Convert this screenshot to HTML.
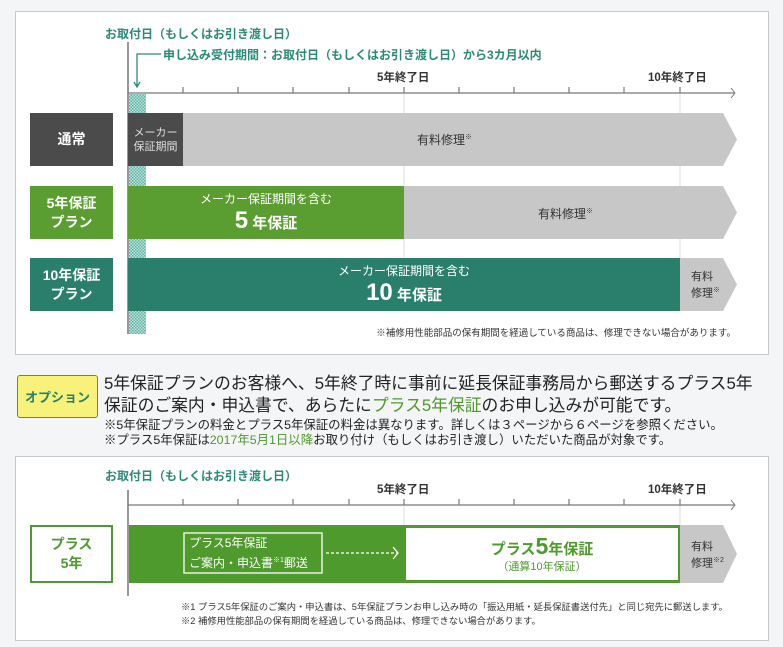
<!DOCTYPE html>
<html><head><meta charset="utf-8"><style>
*{margin:0;padding:0;box-sizing:border-box}
body{width:783px;height:647px;background:#f4f5f6;position:relative;overflow:hidden;font-family:"Liberation Sans","Noto Sans CJK JP",sans-serif;color:#333}
.a{position:absolute;white-space:nowrap}
.box{position:absolute;background:#fff;border:1px solid #c8c8c8}
.lbl{position:absolute;color:#fff;font-weight:bold;font-size:14px;display:flex;align-items:center;justify-content:center;text-align:center;line-height:19px}
.c{display:flex;align-items:center;justify-content:center;text-align:center;flex-direction:column}
.teal{color:#2a8a78}
</style></head><body>
<div class="box" style="left:15px;top:11px;width:754px;height:344px"></div>
<div class="box" style="left:15px;top:456px;width:754px;height:185px"></div>
<svg class="a" style="left:0;top:0" width="783" height="647">
<defs><pattern id="h" width="3" height="3" patternUnits="userSpaceOnUse"><rect width="3" height="3" fill="#bfe3dc"/><rect width="1.5" height="1.5" fill="#5fb3a3"/><rect x="1.5" y="1.5" width="1.5" height="1.5" fill="#5fb3a3"/></pattern></defs>
<rect x="129" y="94" width="17" height="240" fill="url(#h)"/>
<line x1="404" y1="94" x2="404" y2="311" stroke="#ddd"/>
<line x1="680" y1="94" x2="680" y2="311" stroke="#ddd"/>
<line x1="128" y1="42" x2="128" y2="334" stroke="#777" stroke-width="1.5"/>
<line x1="128" y1="93" x2="734" y2="93" stroke="#777" stroke-width="1.2"/>
<path d="M731 88 L735 93 L731 98" fill="none" stroke="#777"/>
<g stroke="#777" stroke-width="1.2"><line x1="183" y1="87" x2="183" y2="93"/><line x1="238" y1="87" x2="238" y2="93"/><line x1="293" y1="87" x2="293" y2="93"/><line x1="349" y1="87" x2="349" y2="93"/><line x1="404" y1="87" x2="404" y2="93"/><line x1="459" y1="87" x2="459" y2="93"/><line x1="514" y1="87" x2="514" y2="93"/><line x1="569" y1="87" x2="569" y2="93"/><line x1="624" y1="87" x2="624" y2="93"/><line x1="680" y1="87" x2="680" y2="93"/></g>
<path d="M161 54 L137 54 L137 86 M134 82 L137 87 L140 82" fill="none" stroke="#2a8a78" stroke-width="1.3"/>
<polygon points="183,113 723,113 737,139.5 723,166 183,166" fill="#c6c7c6"/>
<rect x="128" y="113" width="55" height="53" fill="#4b4b4b"/>
<polygon points="404,186 723,186 737,212.5 723,239 404,239" fill="#c6c7c6"/>
<rect x="128" y="186" width="276" height="53" fill="#5a9e32"/>
<polygon points="680,258 723,258 737,284.5 723,311 680,311" fill="#c6c7c6"/>
<rect x="128" y="258" width="552" height="53" fill="#2a7f6c"/>
<line x1="404" y1="505" x2="404" y2="525" stroke="#ddd"/>
<line x1="680" y1="505" x2="680" y2="525" stroke="#ddd"/>
<line x1="128" y1="490" x2="128" y2="596" stroke="#777" stroke-width="1.5"/>
<line x1="128" y1="505" x2="734" y2="505" stroke="#777" stroke-width="1.2"/>
<path d="M731 500 L735 505 L731 510" fill="none" stroke="#777"/>
<g stroke="#777" stroke-width="1.2"><line x1="183" y1="499" x2="183" y2="505"/><line x1="238" y1="499" x2="238" y2="505"/><line x1="293" y1="499" x2="293" y2="505"/><line x1="349" y1="499" x2="349" y2="505"/><line x1="404" y1="499" x2="404" y2="505"/><line x1="459" y1="499" x2="459" y2="505"/><line x1="514" y1="499" x2="514" y2="505"/><line x1="569" y1="499" x2="569" y2="505"/><line x1="624" y1="499" x2="624" y2="505"/><line x1="680" y1="499" x2="680" y2="505"/></g>
<polygon points="680,525 723,525 737,554 723,583 680,583" fill="#c6c7c6"/>
<rect x="129" y="525" width="551" height="58" fill="#4f9a2c"/>
<rect x="406" y="528" width="272" height="52" fill="#fff"/>
<rect x="184" y="533" width="138" height="40" fill="none" stroke="#fff" stroke-width="1.3"/>
<line x1="326" y1="553" x2="398" y2="553" stroke="#fff" stroke-width="1.3" stroke-dasharray="3 2"/>
<path d="M393 547 L398 553 L393 559" fill="none" stroke="#fff" stroke-width="1.3"/>
</svg>
<div class="a teal" style="left:105px;top:25px;font-size:12px;font-weight:bold">お取付日（もしくはお引き渡し日）</div>
<div class="a teal" style="left:163px;top:46px;font-size:12px;font-weight:bold">申し込み受付期間：お取付日（もしくはお引き渡し日）から3カ月以内</div>
<div class="a" style="left:377px;top:69px;font-size:11.5px;font-weight:bold">5年終了日</div>
<div class="a" style="left:648px;top:69px;font-size:11.5px;font-weight:bold">10年終了日</div>
<div class="lbl" style="left:30px;top:113px;width:83px;height:53px;background:#4b4b4b">通常</div>
<div class="lbl" style="left:30px;top:186px;width:83px;height:53px;background:#5a9e32">5年保証<br>プラン</div>
<div class="lbl" style="left:30px;top:258px;width:83px;height:53px;background:#2a7f6c">10年保証<br>プラン</div>
<div class="a c" style="left:128px;top:113px;width:55px;height:53px;color:#ddd;font-size:11px;line-height:14px">メーカー<br>保証期間</div>
<div class="a" style="left:417px;top:131px;font-size:12px">有料修理<sup style="font-size:7px">※</sup></div>
<div class="a c" style="left:128px;top:186px;width:276px;height:53px;color:#fff"><div style="font-size:12px">メーカー保証期間を含む</div><div style="font-weight:bold;font-size:15px"><span style="font-size:24px">5</span> 年保証</div></div>
<div class="a" style="left:538px;top:205px;font-size:12px">有料修理<sup style="font-size:7px">※</sup></div>
<div class="a c" style="left:128px;top:258px;width:552px;height:53px;color:#fff"><div style="font-size:12px">メーカー保証期間を含む</div><div style="font-weight:bold;font-size:15px"><span style="font-size:24px">10</span> 年保証</div></div>
<div class="a" style="left:691px;top:270px;font-size:11px;line-height:14px">有料<br>修理<sup style="font-size:7px">※</sup></div>
<div class="a" style="right:47px;top:325px;font-size:9.5px">※補修用性能部品の保有期間を経過している商品は、修理できない場合があります。</div>
<div class="a c" style="left:17px;top:375px;width:81px;height:43px;background:#f8f27a;border:1.5px solid #4f9a2c;border-radius:3px;color:#2a7f6c;font-weight:bold;font-size:13px">オプション</div>
<div class="a" style="left:104px;top:373px;font-size:16.8px;line-height:22px;color:#222">5年保証プランのお客様へ、5年終了時に事前に延長保証事務局から郵送するプラス5年<br>保証のご案内・申込書で、あらたに<b style="color:#4f9a2c;font-weight:normal">プラス5年保証</b>のお申し込みが可能です。</div>
<div class="a" style="left:104px;top:418px;font-size:12.4px;line-height:15px;color:#222">※5年保証プランの料金とプラス5年保証の料金は異なります。詳しくは３ページから６ページを参照ください。<br>※プラス5年保証は<span style="color:#4f9a2c">2017年5月1日以降</span>お取り付け（もしくはお引き渡し）いただいた商品が対象です。</div>
<div class="a teal" style="left:105px;top:467px;font-size:12px;font-weight:bold">お取付日（もしくはお引き渡し日）</div>
<div class="a" style="left:377px;top:481px;font-size:11.5px;font-weight:bold">5年終了日</div>
<div class="a" style="left:648px;top:481px;font-size:11.5px;font-weight:bold">10年終了日</div>
<div class="a c" style="left:30px;top:525px;width:83px;height:58px;background:#fff;border:2px solid #4f9a2c;color:#4f9a2c;font-weight:bold;font-size:14px;line-height:19px">プラス<br>5年</div>
<div class="a" style="left:189px;top:535px;font-size:12px;line-height:17px;color:#fff">プラス5年保証<br>ご案内・申込書<sup style="font-size:7px">※1</sup>郵送</div>
<div class="a c" style="left:406px;top:528px;width:272px;height:52px;color:#4f9a2c;font-weight:bold"><div style="font-size:15px;line-height:22px">プラス<span style="font-size:23px">5</span>年保証</div><div style="font-size:11px;font-weight:normal;line-height:13px">（通算10年保証）</div></div>
<div class="a" style="left:691px;top:540px;font-size:11px;line-height:14px">有料<br>修理<sup style="font-size:7px">※2</sup></div>
<div class="a" style="left:181px;top:600px;font-size:9.3px;line-height:14px">※1 プラス5年保証のご案内・申込書は、5年保証プランお申し込み時の「振込用紙・延長保証書送付先」と同じ宛先に郵送します。<br>※2 補修用性能部品の保有期間を経過している商品は、修理できない場合があります。</div>
</body></html>
